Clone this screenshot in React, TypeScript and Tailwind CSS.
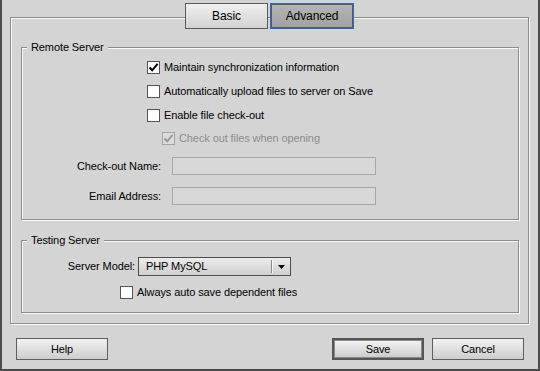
import React from "react";

const FONT = { fontFamily: "Tahoma, 'Liberation Sans', Arial, sans-serif" };

function Check({ checked, disabled }: { checked?: boolean; disabled?: boolean }) {
  return (
    <span
      className={
        "flex h-[13px] w-[13px] shrink-0 items-center justify-center border " +
        (disabled ? "border-[#a4a4a4] bg-[#dcdcdc]" : "border-[#555555] bg-white")
      }
    >
      {checked && (
        <svg width="11" height="11" viewBox="0 0 11 11">
          <path
            d="M1.5 5.5 L4.2 8.3 L9.6 1.8"
            fill="none"
            stroke={disabled ? "#9a9a9a" : "#000"}
            strokeWidth="2"
          />
        </svg>
      )}
    </span>
  );
}

function CheckRow({
  label,
  checked,
  disabled,
  className,
}: {
  label: string;
  checked?: boolean;
  disabled?: boolean;
  className?: string;
}) {
  return (
    <div className={"flex items-center gap-[4px] " + (className ?? "")}>
      <Check checked={checked} disabled={disabled} />
      <span className={disabled ? "text-[#8c8c8c]" : "text-black"}>{label}</span>
    </div>
  );
}

function Group({
  title,
  className,
  children,
}: {
  title: string;
  className?: string;
  children: React.ReactNode;
}) {
  return (
    <div
      className={
        "relative ml-[10px] flex w-[498px] flex-col border border-[#8c8c8c] shadow-[inset_1px_1px_0_#fafafa,1px_1px_0_#fafafa] " +
        (className ?? "")
      }
    >
      {/* legend sits over the top line */}
      <span className="absolute left-[5px] top-[-8px] bg-[#d4d4d4] px-[4px] leading-[14px]">
        {title}
      </span>
      {children}
    </div>
  );
}

function FieldRow({ label, className }: { label: string; className?: string }) {
  return (
    <div className={"flex h-[18px] items-center gap-[11px] " + (className ?? "")}>
      <span className="w-[139px] text-right">{label}</span>
      <span className="h-[18px] w-[204px] border border-[#a6a6a6] bg-[#d8d8d8]" />
    </div>
  );
}

function Button({ label, primary }: { label: string; primary?: boolean }) {
  return (
    <div
      className={
        "flex h-[22px] w-[92px] items-center justify-center " +
        (primary ? "border-2 border-[#555555]" : "")
      }
    >
      <button
        className={
          "flex h-full w-full items-center justify-center bg-gradient-to-b from-[#f2f2f2] to-[#cdcdcd] text-black " +
          (primary ? "border border-[#8a8a8a]" : "border border-[#5e5e5e]")
        }
      >
        {label}
      </button>
    </div>
  );
}

export default function App() {
  return (
    <div
      style={FONT}
      className="flex h-[371px] w-[540px] flex-col border-x-2 border-b-2 border-[#4b4b4b] bg-[#d4d4d4] px-[8px] pt-[17px] text-[11px] tracking-[-0.1px] text-black"
    >
      {/* Tab panel */}
      <div className="flex h-[307px] w-[519px] flex-col border border-[#8c8c8c] shadow-[inset_1px_1px_0_#fafafa,1px_1px_0_#fafafa]">
        <div className="mt-[-15px] flex h-[26px] justify-center gap-[2px]">
          <button className="h-[26px] w-[83px] border border-[#5a5a5a] bg-gradient-to-b from-[#f0f0f0] to-[#d2d2d2] text-[12px] text-black">
            Basic
          </button>
          <button className="h-[26px] w-[84px] border border-[#1f6fc9] p-0">
            <span className="flex h-full w-full items-center justify-center border border-[#5a5a5a] bg-gradient-to-b from-[#b4b4b4] to-[#a2a2a2] text-[12px] text-black">
              Advanced
            </span>
          </button>
        </div>

        <Group title="Remote Server" className="mt-[18px] h-[173px] pt-[7px]">
          <CheckRow className="ml-[125px] h-[24px]" checked label="Maintain synchronization information" />
          <CheckRow className="ml-[125px] h-[24px]" label="Automatically upload files to server on Save" />
          <CheckRow className="ml-[125px] h-[24px]" label="Enable file check-out" />
          <CheckRow className="ml-[140px] h-[22px]" checked disabled label="Check out files when opening" />
          <FieldRow className="mt-[8px]" label="Check-out Name:" />
          <FieldRow className="mt-[12px]" label="Email Address:" />
        </Group>

        <Group title="Testing Server" className="mt-[20px] h-[73px] pt-[16px]">
          <div className="flex h-[19px] items-center gap-[3px]">
            <span className="w-[113px] text-right">Server Model:</span>
            <div className="flex h-[19px] w-[153px] items-center border border-[#4e4e4e] bg-gradient-to-b from-[#ececec] to-[#d0d0d0]">
              <span className="flex-1 pl-[7px]">PHP MySQL</span>
              <span className="h-[13px] w-[1px] bg-[#8a8a8a] shadow-[1px_0_0_#fafafa]" />
              <span className="flex w-[18px] justify-center">
                <svg width="7" height="4" viewBox="0 0 7 4">
                  <path d="M0 0 H7 L3.5 4 Z" fill="#000" />
                </svg>
              </span>
            </div>
          </div>
          <CheckRow className="ml-[98px] mt-[4px] h-[24px]" label="Always auto save dependent files" />
        </Group>
      </div>

      <div className="flex flex-1 items-start justify-between pl-[6px] pr-[6px] pt-[14px]">
        <Button label="Help" />
        <div className="flex gap-[8px]">
          <Button label="Save" primary />
          <Button label="Cancel" />
        </div>
      </div>
    </div>
  );
}
